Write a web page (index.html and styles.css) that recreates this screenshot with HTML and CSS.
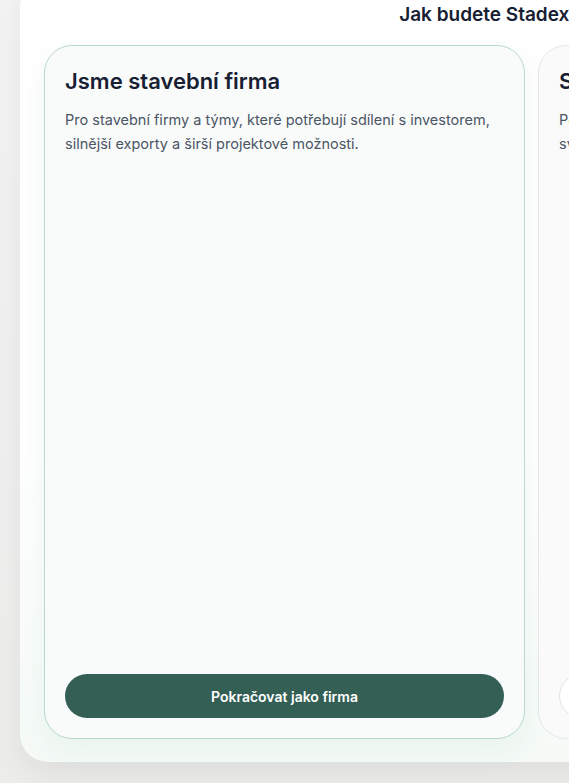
FILE: index.html
```html
<!DOCTYPE html>
<html lang="cs">
<head>
  <meta charset="UTF-8" />
  <meta name="viewport" content="width=device-width, initial-scale=1.0"/>
  <title>Stadex – výběr účtu</title>
  <link rel="stylesheet" href="styles.css">
</head>
<body>
  <div class="panel">
    <h2 class="panel-title">Jak budete Stadex používat?</h2>
    <div class="choices">
      <div class="choice choice-active">
        <h3>Jsme stavební firma</h3>
        <p>Pro stavební firmy a týmy, které potřebují sdílení s investorem, silnější exporty a širší projektové možnosti.</p>
        <button class="btn btn-primary" type="button">Pokračovat jako firma</button>
      </div>
      <div class="choice">
        <h3>Stavím pro sebe</h3>
        <p>Pevný přehled o vlastní stavbě, rozpočtu a termínech<br>svého domu na jednom místě.</p>
        <button class="btn btn-outline" type="button">Pokračovat jako stavebník</button>
      </div>
    </div>
  </div>
</body>
</html>
```

FILE: styles.css
```css
body {
  font-family: Inter, "Noto Sans", sans-serif;
  background: linear-gradient(180deg, #f3f3f3 0%, #ececeb 100%);
  margin: 0;
  overflow: hidden;
  height: 783px;
}
.panel {
  width: 1023px;
  box-sizing: border-box;
  margin: -20px 0 0 20px;
  padding: 21px 24px 23px;
  background: linear-gradient(180deg, #ffffff 60%, #f5faf7 100%);
  border-radius: 28px;
  box-shadow: 0 12px 30px rgba(0,0,0,0.06);
}
.panel-title {
  margin: 0 0 16px;
  text-align: center;
  font-size: 19px;
  line-height: 28px;
  font-weight: 600;
  color: #172033;
}
.choices {
  display: grid;
  grid-template-columns: 1fr 1fr;
  gap: 13px;
}
.choice {
  height: 694px;
  box-sizing: border-box;
  padding: 20px;
  display: flex;
  flex-direction: column;
  border: 1px solid #e4e6e8;
  border-radius: 28px;
  background-color: #fafafa;
}
.choice-active {
  border-color: #b7dacb;
  background-color: #f9fbfa;
  box-shadow: 0 10px 30px rgba(60,150,100,0.08);
}
.choice h3 {
  margin: 0 0 12px;
  font-size: 22px;
  line-height: 30px;
  font-weight: 600;
  color: #172033;
}
.choice p {
  margin: 0;
  font-size: 14.5px;
  line-height: 24px;
  color: #4a5565;
}
.btn {
  margin-top: auto;
  height: 44px;
  border-radius: 22px;
  font-family: inherit;
  font-size: 14px;
  font-weight: 600;
  cursor: pointer;
}
.btn-primary {
  background-color: #335f55;
  color: #fff;
  border: none;
}
.btn-outline {
  background-color: #fff;
  color: #172033;
  border: 1px solid #dfe2e5;
}
```
